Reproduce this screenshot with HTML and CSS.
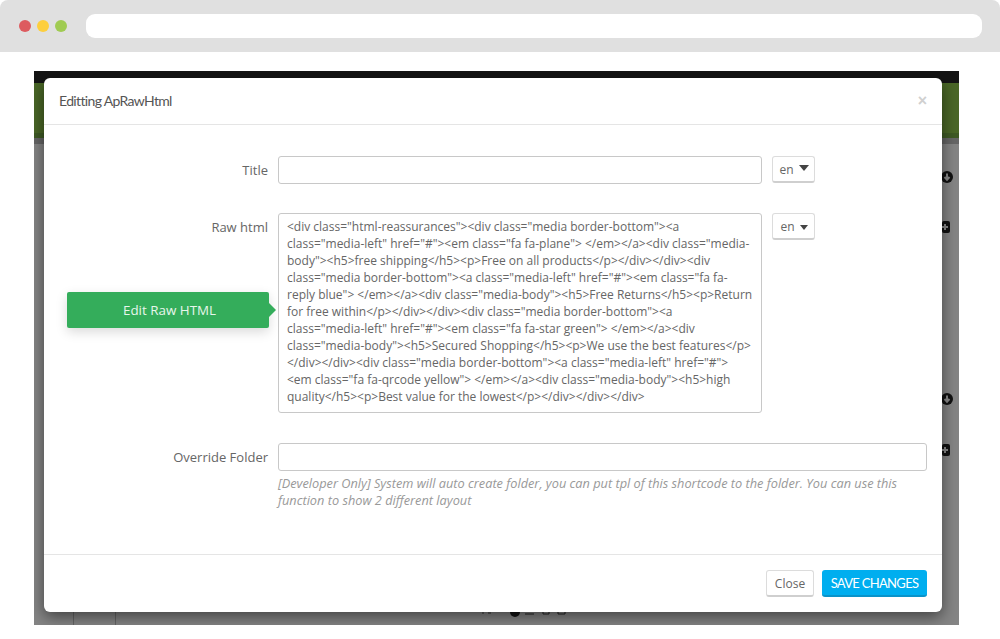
FILE: index.html
```html
<!DOCTYPE html>
<html lang="en">
<head>
<meta charset="utf-8">
<title>Editting ApRawHtml</title>
<link rel="stylesheet" href="styles.css">
</head>
<body>
<header class="chrome">
  <span class="dot dot-red"></span>
  <span class="dot dot-yellow"></span>
  <span class="dot dot-green"></span>
  <div class="address"></div>
</header>
<main class="stage">
  <div class="backdrop-top"></div>
  <span class="bg-line bl-1"></span>
  <span class="bg-line bl-2"></span>
  <svg class="bg-icon bi-1" viewBox="0 0 12 12"><circle cx="6" cy="6" r="6" fill="#111"/><path d="M6 2.5v6M3.5 6 6 8.7 8.5 6" fill="none" stroke="#888" stroke-width="2"/></svg>
  <svg class="bg-icon bi-2" viewBox="0 0 12 12"><rect x="0" y="0" width="8" height="12" rx="2" fill="#111"/><path d="M0 6h6M3 3v6" stroke="#888" stroke-width="2"/></svg>
  <svg class="bg-icon bi-3" viewBox="0 0 12 12"><circle cx="6" cy="6" r="6" fill="#111"/><path d="M6 2.5v6M3.5 6 6 8.7 8.5 6" fill="none" stroke="#888" stroke-width="2"/></svg>
  <svg class="bg-icon bi-4" viewBox="0 0 12 12"><rect x="0" y="0" width="8" height="12" rx="2" fill="#111"/><path d="M0 6h6M3 3v6" stroke="#888" stroke-width="2"/></svg>
  <svg class="bg-tools" viewBox="0 0 100 8"><circle cx="33" cy="2" r="5" fill="#111"/><path d="M43 4h9M61 1v3h6V1M76 1v3h7V1" fill="none" stroke="#222" stroke-width="1"/><path d="M0 3h2M6 3h3" stroke="#333" stroke-width="1"/></svg>
  <div class="modal">
    <div class="modal-head">
      <h4 class="modal-title">Editting ApRawHtml</h4>
      <span class="close-x">×</span>
    </div>
    <div class="modal-body">
      <div class="row row-title">
        <label class="label">Title</label>
        <input class="field field-short" type="text">
        <button class="lang">en <svg class="caret caret-big" viewBox="0 0 10 6"><path d="M0 0h10L5 6z"/></svg></button>
      </div>
      <div class="row row-raw">
        <label class="label">Raw html</label>
        <div class="field area">&lt;div class="html-reassurances"&gt;&lt;div class="media border-bottom"&gt;&lt;a<br>class="media-left" href="#"&gt;&lt;em class="fa fa-plane"&gt; &lt;/em&gt;&lt;/a&gt;&lt;div class="media-<br>body"&gt;&lt;h5&gt;free shipping&lt;/h5&gt;&lt;p&gt;Free on all products&lt;/p&gt;&lt;/div&gt;&lt;/div&gt;&lt;div<br>class="media border-bottom"&gt;&lt;a class="media-left" href="#"&gt;&lt;em class="fa fa-<br>reply blue"&gt; &lt;/em&gt;&lt;/a&gt;&lt;div class="media-body"&gt;&lt;h5&gt;Free Returns&lt;/h5&gt;&lt;p&gt;Return<br>for free within&lt;/p&gt;&lt;/div&gt;&lt;/div&gt;&lt;div class="media border-bottom"&gt;&lt;a<br>class="media-left" href="#"&gt;&lt;em class="fa fa-star green"&gt; &lt;/em&gt;&lt;/a&gt;&lt;div<br>class="media-body"&gt;&lt;h5&gt;Secured Shopping&lt;/h5&gt;&lt;p&gt;We use the best features&lt;/p&gt;<br>&lt;/div&gt;&lt;/div&gt;&lt;div class="media border-bottom"&gt;&lt;a class="media-left" href="#"&gt;<br>&lt;em class="fa fa-qrcode yellow"&gt; &lt;/em&gt;&lt;/a&gt;&lt;div class="media-body"&gt;&lt;h5&gt;high<br>quality&lt;/h5&gt;&lt;p&gt;Best value for the lowest&lt;/p&gt;&lt;/div&gt;&lt;/div&gt;&lt;/div&gt;</div>
        <button class="lang">en <svg class="caret" viewBox="0 0 10 6"><path d="M0 0h10L5 6z"/></svg></button>
        <div class="tag">Edit Raw HTML</div>
      </div>
      <div class="row row-folder">
        <label class="label">Override Folder</label>
        <div class="folder-col">
          <input class="field field-full" type="text">
          <p class="help">[Developer Only] System will auto create folder, you can put tpl of this shortcode to the folder. You can use this function to show 2 different layout</p>
        </div>
      </div>
    </div>
    <div class="modal-foot">
      <button class="btn-close">Close</button>
      <button class="btn-save">SAVE CHANGES</button>
    </div>
  </div>
</main>
</body>
</html>
```
FILE: styles.css
```css
* { box-sizing: border-box; }
html, body { margin: 0; padding: 0; }
body {
  width: 1000px;
  height: 639px;
  background: #fff;
  font-family: "Open Sans", sans-serif;
  color: #666;
  overflow: hidden;
}
.chrome {
  height: 52px;
  background: #e0e0e0;
  border-radius: 8px 8px 0 0;
  display: flex;
  align-items: center;
  padding: 0 18px 0 19px;
}
.dot { width: 12px; height: 12px; border-radius: 50%; margin-right: 6px; }
.dot-red { background: #dd5b5f; }
.dot-yellow { background: #fdcf3e; }
.dot-green { background: #a0cb52; }
.address {
  flex: 1;
  height: 24px;
  margin-left: 13px;
  background: #fff;
  border-radius: 9px;
}
.stage {
  position: relative;
  width: 925px;
  height: 554px;
  margin: 19px 0 0 34px;
  padding: 7px 17px 13px 10px;
  background: #858585;
  overflow: hidden;
}
.backdrop-top {
  position: absolute;
  left: 0; top: 0; right: 0;
  height: 73px;
  background: linear-gradient(#141414 0 12px, #4a6727 12px 62px, #3f5a25 62px 67px, #666 67px);
}
.bg-line { position: absolute; top: 530px; bottom: 0; width: 1px; background: #666; }
.bl-1 { left: 39px; }
.bl-2 { left: 81px; }
.bg-icon { position: absolute; width: 12px; height: 12px; }
.bi-1 { left: 907px; top: 100px; }
.bi-2 { left: 908px; top: 150px; }
.bi-3 { left: 907px; top: 322px; }
.bi-4 { left: 908px; top: 373px; }
.bg-tools { position: absolute; left: 448px; top: 539px; width: 100px; height: 8px; }
.modal {
  position: relative;
  height: 534px;
  background: #fff;
  border-radius: 6px;
  display: flex;
  flex-direction: column;
  box-shadow: 0 5px 15px rgba(0,0,0,.5);
}
.modal-head {
  height: 47px;
  border-bottom: 1px solid #e5e5e5;
  display: flex;
  align-items: center;
  justify-content: space-between;
  padding: 0 15px;
}
.modal-title {
  margin: 0;
  font: 400 14px/20px Lato, sans-serif;
  letter-spacing: -0.65px;
  color: #555;
}
.close-x {
  font: 700 16px/1 "Liberation Sans", sans-serif;
  color: #d0d0d0;
  margin-right: 0;
}
.modal-body { flex: 1; padding-top: 31px; }
.row { display: flex; align-items: flex-start; }
.label {
  width: 234px;
  padding-right: 10px;
  text-align: right;
  font-size: 13px;
  line-height: 28px;
  color: #666;
}
.row-raw { position: relative; margin-top: 29px; }
.row-folder { margin-top: 30px; }
.field {
  border: 1px solid #c8c8c8;
  border-radius: 3px;
  background: #fff;
  height: 28px;
  padding: 0 8px;
}
.field-short { width: 484px; }
.field-full { width: 649px; display: block; }
.area {
  width: 484px;
  height: 200px;
  padding: 4px 8px;
  font-size: 12px;
  line-height: 17px;
  color: #666;
  white-space: nowrap;
}
.lang {
  margin-left: 10px;
  width: 43px;
  height: 27px;
  padding: 2px 0 0 1px;
  border: 1px solid #dcdcdc;
  border-bottom: 2px solid #cfcfcf;
  border-radius: 3px;
  background: #fff;
  font: 400 12px/1 "Open Sans", sans-serif;
  color: #666;
}
.caret { width: 8px; height: 5px; fill: #444; margin-left: 2px; vertical-align: 1px; }
.caret-big { width: 10px; height: 6px; vertical-align: 3px; }
.tag {
  position: absolute;
  left: 23px;
  top: 79px;
  width: 202px;
  height: 36px;
  padding-left: 3px;
  background: #34ad5b;
  border-radius: 2px;
  color: #e8f6ec;
  font-size: 13.4px;
  line-height: 36px;
  text-align: center;
  box-shadow: 0 4px 12px rgba(0,0,0,.15);
}
.tag::after {
  content: "";
  position: absolute;
  right: -7px;
  top: 11px;
  border-left: 7px solid #34ad5b;
  border-top: 7px solid transparent;
  border-bottom: 7px solid transparent;
}
.folder-col { width: 649px; }
.help {
  margin: 4px 0 0;
  font-size: 12.75px;
  line-height: 17px;
  font-style: italic;
  color: #999;
}
.modal-foot {
  height: 58px;
  border-top: 1px solid #e5e5e5;
  display: flex;
  justify-content: flex-end;
  align-items: flex-start;
  gap: 8px;
  padding: 15px 15px 0;
}
.btn-close {
  width: 48px;
  height: 27px;
  padding: 2px 0 0;
  border: 1px solid #dcdcdc;
  border-bottom: 2px solid #cfcfcf;
  border-radius: 3px;
  background: #fff;
  font: 400 12px/1 "Open Sans", sans-serif;
  color: #666;
}
.btn-save {
  width: 105px;
  height: 27px;
  padding: 2px 0 0;
  border: 0;
  border-bottom: 2px solid #0a93c9;
  border-radius: 3px;
  background: #00aeef;
  font: 400 13px/1 Lato, sans-serif;
  letter-spacing: -0.7px;
  color: #fff;
}
```
